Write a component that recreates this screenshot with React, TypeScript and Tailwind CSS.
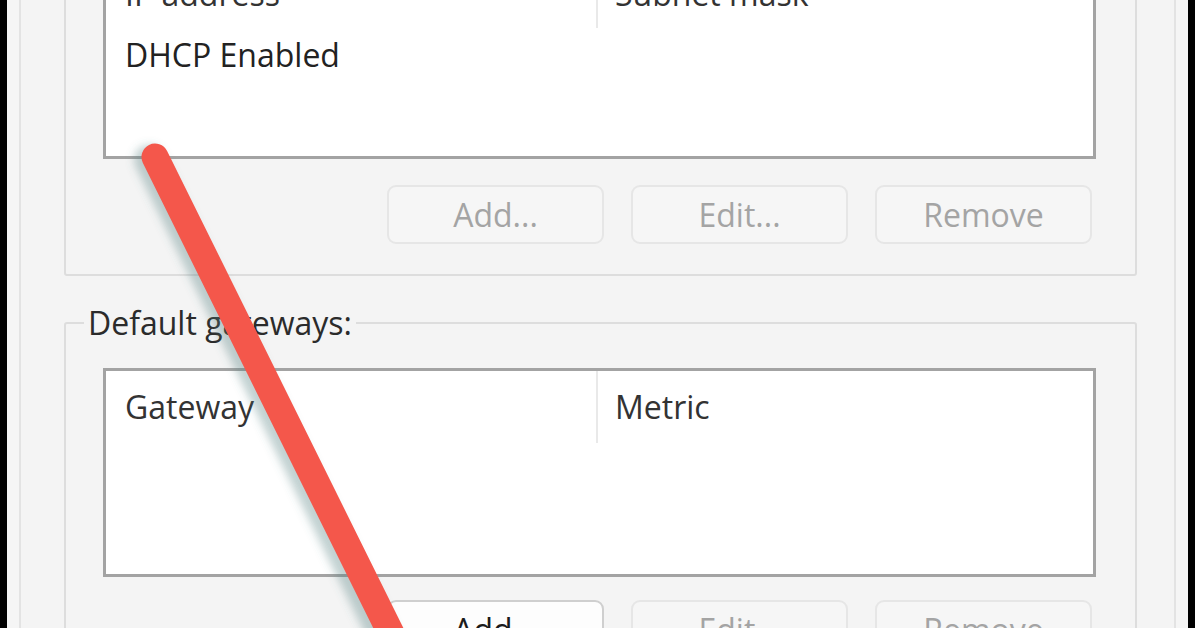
import type { ReactNode } from 'react'

type Col = { label: string }

function ListBox({ cols, rows, headerH = 72 }: { cols: Col[]; rows: string[]; headerH?: number }) {
	return (
		<div className="h-full bg-white border-[3px] border-[#a3a3a3] flex flex-col">
			<div className={headerH === 72 ? 'flex h-[72px] shrink-0' : 'flex h-[68px] shrink-0'}>
				<div className="w-[492px] flex items-center pl-[19px] border-r-2 border-[#e9e9e9] text-[#333333]">
					{cols[0].label}
				</div>
				<div className="flex-1 flex items-center pl-[17px] text-[#333333]">{cols[1].label}</div>
			</div>
			{rows.map((row) => (
				<div key={row} className="h-[36px] mt-[9px] flex items-center pl-[19px] text-[#222222]">
					{row}
				</div>
			))}
		</div>
	)
}

function DlgButton({ children, enabled = false }: { children: ReactNode; enabled?: boolean }) {
	return (
		<button
			className={
				enabled
					? 'w-[217px] h-[59px] rounded-[9px] border-2 border-[#cfcfcf] bg-[#fdfdfd] text-[#1b1b1b]'
					: 'w-[217px] h-[59px] rounded-[9px] border-2 border-[#e6e6e6] bg-[#f6f6f6] text-[#a4a4a4]'
			}
		>
			{children}
		</button>
	)
}

function ButtonRow({ addEnabled = false }: { addEnabled?: boolean }) {
	return (
		<div className="flex justify-end gap-[27px] pr-[43px]">
			<DlgButton enabled={addEnabled}>Add...</DlgButton>
			<DlgButton>Edit...</DlgButton>
			<DlgButton>Remove</DlgButton>
		</div>
	)
}

function Arrow() {
	return (
		<svg className="absolute inset-0 pointer-events-none" width="1195" height="628" viewBox="0 0 1195 628">
			<defs>
				<filter id="blur" x="-20%" y="-20%" width="140%" height="140%">
					<feGaussianBlur stdDeviation="4" />
				</filter>
			</defs>
			<line x1="149" y1="160" x2="413" y2="697" stroke="#4f7a7a" strokeOpacity="0.35" strokeWidth="30" strokeLinecap="round" filter="url(#blur)" />
			<line x1="155" y1="157" x2="421" y2="694" stroke="#f4574b" strokeWidth="27" strokeLinecap="round" />
		</svg>
	)
}

export default function App() {
	return (
		<div className="relative w-[1195px] h-[628px] overflow-hidden flex bg-black font-['Open_Sans','Noto_Sans',sans-serif] font-medium text-[32px] leading-[36px]">
			<div className="w-[7px] shrink-0 bg-black" />
			<div className="w-[1181px] shrink-0 bg-[#f5f5f5] px-[12px]">
				<div className="h-full overflow-hidden flex flex-col border-x-2 border-[#e3e3e3] bg-[#f4f4f4]">
					<div className="-mt-[120px] pl-[43px] pr-[37px]">
						<div className="border-2 border-[#dddddd] rounded-[3px] pt-[75px] pb-[30px] pl-[37px] pr-[39px]">
							<div className="h-[202px]">
								<ListBox headerH={68} cols={[{ label: 'IP address' }, { label: 'Subnet mask' }]} rows={['DHCP Enabled']} />
							</div>
							<div className="mt-[26px] -mr-[39px]">
								<ButtonRow />
							</div>
						</div>

						<fieldset className="mt-[29px] border-2 border-[#dddddd] rounded-[3px] pt-[27px] pb-[30px] pl-[37px] pr-[39px]">
							<legend className="-ml-[19px] px-[4px] text-[#2b2b2b]">Default gateways:</legend>
							<div className="h-[209px]">
								<ListBox cols={[{ label: 'Gateway' }, { label: 'Metric' }]} rows={[]} />
							</div>
							<div className="mt-[23px] -mr-[39px]">
								<ButtonRow addEnabled />
							</div>
						</fieldset>
					</div>
				</div>
			</div>
			<div className="w-[7px] shrink-0 bg-black" />
			<Arrow />
		</div>
	)
}
